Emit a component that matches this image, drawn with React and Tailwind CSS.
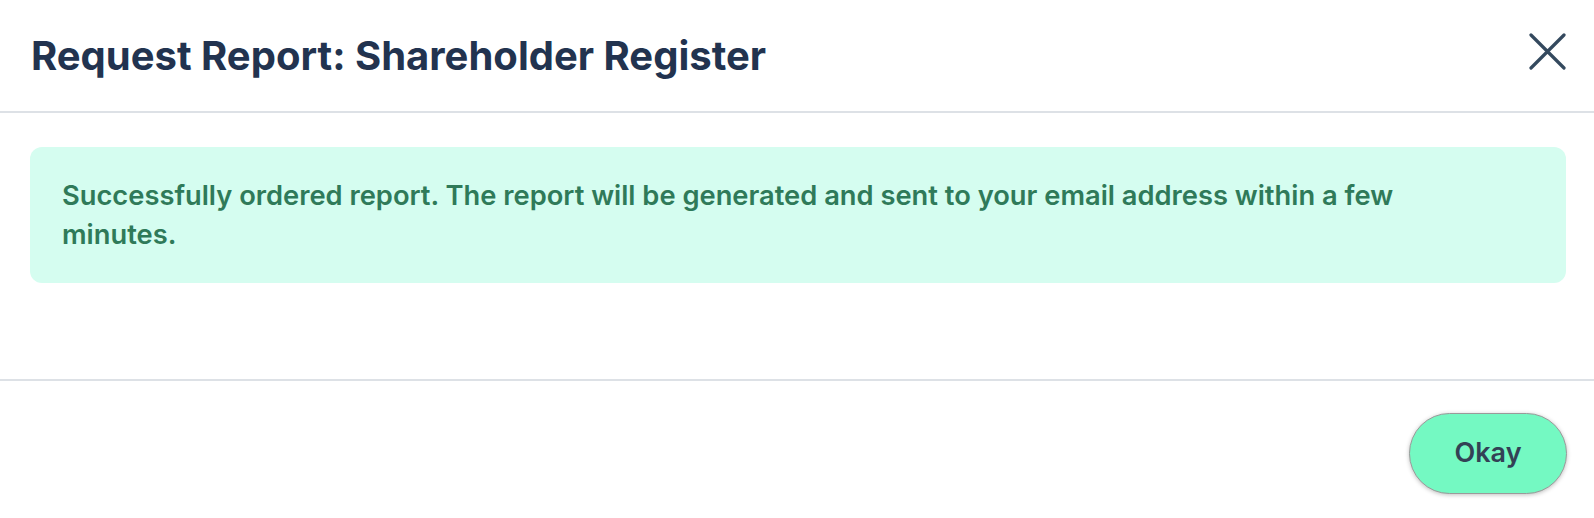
export default function App() {
  return (
    <div className="min-h-[518px] w-full bg-white font-['Inter','Noto_Sans',sans-serif]">
      <header className="flex h-[113px] items-center justify-between border-b-2 border-[#dde1e6] pl-[31px] pr-[28px]">
        <h1 className="text-[40px] font-bold leading-none text-[#22334f]">
          Request Report: Shareholder Register
        </h1>
        <button type="button" aria-label="Close" className="mb-[8px] flex h-[37px] w-[37px] items-center justify-center text-[#34495e]">
          <svg width="37" height="37" viewBox="0 0 37 37" fill="none" stroke="currentColor" strokeWidth="3.2" strokeLinecap="round">
            <path d="M2 2L35 35M35 2L2 35" />
          </svg>
        </button>
      </header>

      <main className="pb-[96px] pl-[30px] pr-[28px] pt-[34px]">
        <div className="rounded-[12px] bg-[#d5fdf0] py-[29px] pl-[32px] pr-[80px]">
          <p className="text-[27.3px] font-semibold leading-[39px] text-[#2f7a59]">
            Successfully ordered report. The report will be generated and sent to your email address within a few
            minutes.
          </p>
        </div>
      </main>

      <footer className="flex justify-end border-t-2 border-[#dde1e6] pb-[24px] pr-[27px] pt-[32px]">
        <button
          type="button"
          className="h-[81px] w-[158px] rounded-full border border-[#9a9a9a] bg-[#74f9c2] text-[27px] font-semibold text-[#334155] shadow-[0_1px_4px_rgba(0,0,0,0.25)]"
        >
          Okay
        </button>
      </footer>
    </div>
  );
}
